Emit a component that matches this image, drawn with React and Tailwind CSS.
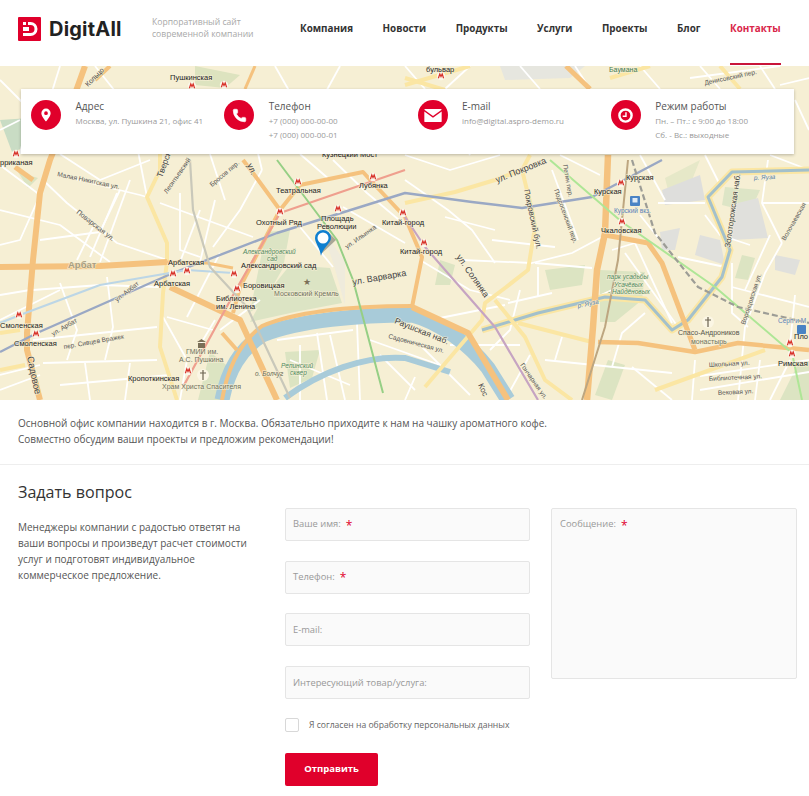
import { Phone } from "lucide-react";

const LAND = "#f6efd4";

// streets of the map, in page coordinates (viewBox starts at y=66)
const whiteStreets = [
  "M57 175 L140 195 L147 197", "M43 180 L67 203 L117 243 L167 260", "M117 193 L90 257", "M93 227 L77 260",
  "M160 203 L253 237", "M180 193 L180 250 L200 257", "M213 247 L240 210 L262 170", "M60 283 L77 330 L67 360",
  "M107 277 L113 327 L105 360", "M33 290 L100 285 L160 287", "M33 340 L157 327", "M167 317 L213 330", "M43 363 L157 360",
  "M187 317 L220 253", "M163 317 L187 360 L180 400", "M300 227 L333 267", "M343 207 L405 243", "M333 160 L367 193 L405 225",
  "M317 333 L327 400", "M357 323 L360 400", "M277 340 L353 330", "M405 180 L448 210 L472 230 L495 263", "M462 260 L532 263 L572 253 L602 237",
  "M492 240 L555 247", "M538 267 L538 297", "M508 303 L552 293", "M552 170 L578 240", "M535 263 L592 268", "M445 217 L495 230",
  "M625 253 L678 327", "M612 250 L635 243", "M635 243 L672 323", "M645 313 L622 333 L612 367", "M732 287 L809 307",
  "M678 257 L725 267", "M732 263 L732 313 L748 327", "M782 243 L765 273 L745 327 L738 400", "M658 203 L705 203", "M762 203 L809 203",
  "M768 160 L762 203 L782 243", "M695 360 L692 400", "M545 360 L672 373", "M632 367 L672 400", "M562 337 L555 360", "M415 377 L405 400",
  "M0 80 L30 110 L20 154", "M60 66 L40 130", "M95 66 L130 110 L147 197", "M0 210 L60 225 L110 262", "M40 240 L100 232 L120 190",
  "M130 180 L100 262", "M0 320 L60 290", "M0 375 L40 365", "M60 385 L170 375", "M130 363 L125 400", "M85 363 L90 400",
  "M200 210 L180 262", "M215 200 L200 262", "M250 120 L262 170", "M275 66 L300 110", "M340 66 L305 130", "M405 66 L425 89",
  "M470 66 L445 89", "M520 66 L540 89", "M575 66 L590 89", "M640 66 L660 89", "M690 78 L780 66", "M700 66 L720 89", "M760 66 L775 89",
  "M780 85 L809 78", "M795 100 L809 130", "M0 130 L20 120", "M405 155 L450 170 L500 155", "M560 155 L600 175", "M640 155 L665 200",
  "M705 155 L720 185", "M770 155 L809 170", "M0 165 L40 195 L20 240 L0 245", "M60 154 L100 180 L150 160", "M210 154 L225 200",
  "M300 154 L330 180", "M420 260 L470 290 L510 300", "M430 320 L505 305", "M520 290 L510 330 L490 350", "M450 345 L520 345", "M530 355 L505 400",
  "M590 300 L612 290", "M700 390 L809 372", "M700 376 L809 360", "M760 360 L755 400", "M790 360 L770 400", "M745 290 L770 235",
  "M705 215 L720 235 L750 245", "M640 215 L660 240", "M795 295 L790 345", "M0 295 L30 290", "M0 390 L40 375", "M220 330 L260 300",
  "M200 345 L215 320", "M300 345 L300 400", "M330 335 L345 400", "M370 340 L440 365", "M380 355 L415 390", "M420 345 L470 395",
  "M290 360 L350 385", "M460 135 L470 155",
];

const yellowStreets = [
  "M160 170 L147 197 L167 243 L167 262 L163 293 L160 347 L177 400",
  "M160 154 L160 170",
  "M405 203 L455 192 L495 180 L522 170 L532 210 L535 227 L528 270 L505 288 L485 303 L482 320 L442 367 L425 387",
  "M522 170 L530 155",
  "M495 300 L525 337 L545 380 L572 400",
  "M518 323 L592 342",
  "M655 390 L765 350",
  "M0 333 L20 330",
  "M405 78 L445 90", "M405 85 L470 66",
  "M610 78 L650 66",
  "M0 370 L25 365",
  "M720 66 L740 89",
];

const yauza = "M482 330 L538 313 L605 297 L645 300 L672 330 L688 320 L722 277 L730 250 L708 197 L732 172 L809 170";

const orangeRoads = [
  { d: "M85 66 L62 130 L50 160 L40 193 L33 260 L27 333 L27 350 L40 400", w: 6 },
  { d: "M0 267 L100 266 L167 262", w: 6 },
  { d: "M167 262 L207 263 L233 268", w: 3 },
  { d: "M15 167 L33 180", w: 5 },
  { d: "M170 287 L240 320 L277 400", w: 6 },
  { d: "M243 160 L253 173 L280 210 L240 287 L233 313", w: 4 },
  { d: "M280 210 L300 185 L363 172 L373 183 L405 217 L422 257 L412 307", w: 4 },
  { d: "M412 307 L468 333 L508 400", w: 6 },
  { d: "M608 155 L605 233 L597 270 L593 327 L587 400", w: 6.5 },
  { d: "M605 235 L648 243 L662 263 L695 350", w: 5 },
  { d: "M598 342 L638 343 L695 352 L738 343 L788 348 L809 350", w: 4.5 },
  { d: "M222 333 L237 350", w: 4 },
  { d: "M566 66 L590 89", w: 5 },
  { d: "M95 80 L110 66", w: 4 },
  { d: "M245 89 L255 66", w: 3 },
];

const metroLines = [
  { d: "M0 352 L37 333 L173 273 L277 233 L405 193 L472 202 L522 208 L592 197 L662 160", c: "#9aa8c4", w: 2.4 },
  { d: "M0 323 L20 315 L100 285 L187 270 L233 273", c: "#bcd6e6", w: 2.2 },
  { d: "M183 387 L237 288 L280 213 L405 170", c: "#ef9f8e", w: 2.2 },
  { d: "M277 160 L337 240 L353 280 L383 393", c: "#96cf85", w: 2 },
  { d: "M190 160 L193 210 L210 267 L247 307 L290 398", c: "#c9c8ba", w: 2.2 },
  { d: "M550 160 L622 222 L715 287 L792 353 L802 400", c: "#aee696", w: 2 },
  { d: "M405 217 L425 247 L495 327 L538 400", c: "#c6a4c2", w: 2.2 },
  { d: "M628 160 L618 260 L605 327 L582 400", c: "#bda680", w: 2 },
  { d: "M632 160 L655 233 L698 287 L738 307 L809 323", c: "#9d9d96", w: 2.2, dash: "6 3" },
];

const parks = [
  { d: "M266 232 L290 230 L283 268 L262 305 L250 312 Z", c: "#dce4c4" },
  { d: "M290 265 L330 268 L342 303 L295 312 L250 322 L262 300 Z", c: "#dce4c4" },
  { d: "M545 270 L585 265 L582 285 L550 290 Z", c: "#dce4c2" },
  { d: "M600 270 L645 272 L642 300 L615 322 L600 322 Z", c: "#dce4c2" },
  { d: "M285 352 L320 350 L312 378 L290 388 Z", c: "#dce4c2" },
  { d: "M210 352 L235 372 L222 400 L198 400 Z", c: "#dce4c2" },
  { d: "M725 187 L760 190 L750 212 L722 205 Z", c: "#dde5c6" },
  { d: "M742 255 L755 258 L748 280 L735 278 Z", c: "#dce4c2" },
  { d: "M665 178 L700 160 L690 185 L668 190 Z", c: "#e6e8c8" },
  { d: "M195 66 L240 75 L225 88 L195 85 Z", c: "#dde3bf" },
  { d: "M0 120 L30 118 L32 145 L12 152 Z", c: "#c9dcc4" },
  { d: "M18 172 L38 178 L28 188 Z", c: "#dce4c2" },
  { d: "M608 360 L625 365 L612 400 L595 395 Z", c: "#dce4c2" },
  { d: "M440 260 L455 265 L450 285 L435 285 Z", c: "#dce4c2" },
  { d: "M800 360 L809 360 L809 400 L780 400 Z", c: "#dce4c2" },
];

const greyBlocks = [
  { d: "M662 190 L700 175 L705 200 L665 205 Z", c: "#dededc" },
  { d: "M730 205 L758 198 L768 238 L732 240 Z", c: "#e0e0dc" },
  { d: "M700 235 L720 240 L725 265 L695 255 Z", c: "#e0e0dc" },
  { d: "M775 255 L800 260 L795 275 L775 270 Z", c: "#e0e0dc" },
  { d: "M660 232 L680 228 L675 250 L662 250 Z", c: "#e0e0dc" },
  { d: "M500 66 L585 66 L570 78 L505 80 Z", c: "#e6e6df" },
  { d: "M320 225 L345 262 L345 305 L333 262 Z", c: "#efebdc" },
];

const labels = [
  { t: "Пушкинская", x: 170, y: 80, s: 7.5, c: "#222" },
  { t: "бульвар", x: 426, y: 72, s: 7.5, c: "#222" },
  { t: "Баумана", x: 609, y: 72, s: 7, c: "#3f7a55" },
  { t: "рриканая", x: 0, y: 165, s: 7.5, c: "#222" },
  { t: "Кузнецкий Мост", x: 322, y: 157, s: 7.5, c: "#222" },
  { t: "Театральная", x: 276, y: 193, s: 7.5, c: "#222" },
  { t: "Лубянка", x: 359, y: 188, s: 7.5, c: "#222" },
  { t: "Охотный Ряд", x: 256, y: 225, s: 7.5, c: "#222" },
  { t: "Площадь", x: 321, y: 221, s: 7.5, c: "#222" },
  { t: "Революции", x: 317, y: 228.5, s: 7.5, c: "#222" },
  { t: "Китай-город", x: 382, y: 225, s: 7.5, c: "#222" },
  { t: "Китай-город", x: 400, y: 254, s: 7.5, c: "#222" },
  { t: "Арбатская", x: 168, y: 265, s: 7.5, c: "#222" },
  { t: "Арбатская", x: 154, y: 286, s: 7.5, c: "#222" },
  { t: "Александровский сад", x: 241, y: 267.5, s: 7.5, c: "#222" },
  { t: "Боровицкая", x: 243, y: 288, s: 7.5, c: "#222" },
  { t: "Библиотека", x: 216, y: 301, s: 7.5, c: "#222" },
  { t: "им. Ленина", x: 216, y: 308.5, s: 7.5, c: "#222" },
  { t: "Смоленская", x: 0, y: 328, s: 7.5, c: "#222" },
  { t: "Смоленская", x: 14, y: 346, s: 7.5, c: "#222" },
  { t: "Кропоткинская", x: 128, y: 381, s: 7.5, c: "#222" },
  { t: "Курская", x: 626, y: 180, s: 7.5, c: "#222" },
  { t: "Курская", x: 594, y: 194, s: 7.5, c: "#222" },
  { t: "Чкаловская", x: 601, y: 233, s: 7.5, c: "#222" },
  { t: "Римская", x: 778, y: 366, s: 7.5, c: "#222" },
  { t: "Арбат", x: 68, y: 268, s: 9.5, c: "#a89e82", b: true },
  { t: "Московский Кремль", x: 274, y: 296, s: 7, c: "#6f7260" },
  { t: "Александровский", x: 243, y: 254, s: 6.5, c: "#4f8a62", i: true },
  { t: "сад", x: 267, y: 261, s: 6.5, c: "#4f8a62", i: true },
  { t: "ГМИИ им.", x: 186, y: 354, s: 7, c: "#6f7260" },
  { t: "А.С. Пушкина", x: 179, y: 362, s: 7, c: "#6f7260" },
  { t: "Храм Христа Спасителя", x: 162, y: 389, s: 7, c: "#6f7260" },
  { t: "Репинский", x: 281, y: 368, s: 6.5, c: "#4f8a62", i: true },
  { t: "сквер", x: 290, y: 375, s: 6.5, c: "#4f8a62", i: true },
  { t: "о. Болчуг", x: 255, y: 376, s: 6.5, c: "#6a6a55", i: true },
  { t: "парк усадьбы", x: 607, y: 279, s: 6.5, c: "#4f8a62", i: true },
  { t: "Усачёвых", x: 614, y: 287, s: 6.5, c: "#4f8a62", i: true },
  { t: "- Найдёновых", x: 608, y: 294, s: 6.5, c: "#4f8a62", i: true },
  { t: "Спасо-Андроников", x: 678, y: 335, s: 7, c: "#55554a" },
  { t: "монастырь", x: 691, y: 344, s: 7, c: "#6f7260" },
  { t: "Курский вкз.", x: 614, y: 213, s: 6.5, c: "#5a82b8" },
  { t: "Серп и М", x: 778, y: 323, s: 6.5, c: "#5a82b8" },
  { t: "Пло", x: 794, y: 339, s: 7.5, c: "#222" },
  { t: "Школьная ул.", x: 709, y: 367, s: 6.5, c: "#555", r: -3 },
  { t: "Библиотечная ул.", x: 709, y: 381, s: 6.5, c: "#555", r: -3 },
  { t: "Вековая ул.", x: 718, y: 395, s: 6.5, c: "#555", r: -3 },
  { t: "ул. Покровка", x: 497, y: 183, s: 9, c: "#444", r: -22 },
  { t: "ул. Варварка", x: 353, y: 285, s: 9, c: "#444", r: -10 },
  { t: "ул. Солянка", x: 456, y: 257, s: 9, c: "#444", r: 55 },
  { t: "Покровский бул.", x: 524, y: 190, s: 8, c: "#444", r: 78 },
  { t: "Раушская наб.", x: 394, y: 323, s: 8.5, c: "#444", r: 22 },
  { t: "Садовническая ул.", x: 388, y: 338, s: 6.5, c: "#555", r: 15 },
  { t: "Садовое", x: 27, y: 357, s: 9.5, c: "#444", r: 78 },
  { t: "Золоторожская наб.", x: 730, y: 248, s: 8, c: "#444", r: -82 },
  { t: "р. Яуза", x: 754, y: 180, s: 6.5, c: "#5a82a8", r: -3, i: true },
  { t: "р. Яуза", x: 578, y: 308, s: 6.5, c: "#5a82a8", r: -12, i: true },
  { t: "Поварская ул.", x: 76, y: 213, s: 7, c: "#555", r: 38 },
  { t: "Малая Никитская ул.", x: 57, y: 176, s: 6.5, c: "#555", r: 12 },
  { t: "ул. Арбат", x: 117, y: 302, s: 6.5, c: "#555", r: -38 },
  { t: "ул. Арбат", x: 53, y: 336, s: 6.5, c: "#555", r: -30 },
  { t: "пер. Сивцев Вражек", x: 64, y: 349, s: 6.5, c: "#555", r: -10 },
  { t: "ул. Ильинка", x: 347, y: 249, s: 6.5, c: "#555", r: -35 },
  { t: "Тверская", x: 162, y: 178, s: 8.5, c: "#444", r: -70 },
  { t: "ул.", x: 247, y: 165, s: 8.5, c: "#444", r: 65 },
  { t: "Бросов пер.", x: 212, y: 187, s: 6.5, c: "#555", r: -40 },
  { t: "Леонтьевский", x: 167, y: 194, s: 6.5, c: "#555", r: -55 },
  { t: "Петин пер.", x: 563, y: 165, s: 6.5, c: "#555", r: 80 },
  { t: "Подсосенский пер.", x: 554, y: 190, s: 6.5, c: "#555", r: 70 },
  { t: "Воронцовская ул.", x: 745, y: 325, s: 6.5, c: "#555", r: -72 },
  { t: "Гончарная ул.", x: 520, y: 365, s: 6.5, c: "#555", r: 55 },
  { t: "Денисовский пер.", x: 705, y: 85, s: 6.5, c: "#555", r: -12 },
  { t: "Волочаевская", x: 785, y: 241, s: 6.5, c: "#555", r: -60 },
  { t: "Кольцо", x: 88, y: 87, s: 7, c: "#444", r: -45 },
  { t: "Кос", x: 478, y: 385, s: 8, c: "#444", r: 65 },
];

// metro stations
const stations = [
  [192, 86], [224, 85], [16, 154], [298, 182], [373, 177], [280, 212], [338, 209], [403, 213],
  [424, 243], [187, 271], [173, 274], [234, 274], [237, 289], [19, 315], [36, 334], [188, 371],
  [621, 183], [622, 222], [790, 343], [792, 354], [441, 76],
];

function MapPicture() {
  return (
    <svg viewBox="0 66 809 334" className="block w-full h-full" style={{ fontFamily: "'Liberation Sans', Arial, sans-serif" }}>
      <rect x="0" y="66" width="809" height="334" fill={LAND} />
      {parks.map((p, i) => <path key={i} d={p.d} fill={p.c} />)}
      {greyBlocks.map((p, i) => <path key={i} d={p.d} fill={p.c} />)}

      <g fill="none" stroke="#ffffff" strokeWidth="1.8" strokeLinejoin="round">
        {whiteStreets.map((d, i) => <path key={i} d={d} />)}
      </g>

      {/* river and canal */}
      <path d="M222 400 C228 370 240 350 262 335 C300 320 360 315 412 315 C440 322 470 345 488 368 L508 400" fill="none" stroke="#a8cbd9" strokeWidth="15" />
      <path d="M285 398 C320 372 365 355 405 358 L450 372" fill="none" stroke="#a8cbd9" strokeWidth="6" />
      <path d={yauza} fill="none" stroke="#fbe6a3" strokeWidth="7" strokeLinejoin="round" />
      <path d={yauza} fill="none" stroke="#a3c0cb" strokeWidth="3" strokeLinejoin="round" />

      <g fill="none" stroke="#fbe6a3" strokeWidth="4" strokeLinejoin="round">
        {yellowStreets.map((d, i) => <path key={i} d={d} />)}
      </g>
      <path d="M222 400 C228 365 243 340 262 326 C300 310 360 306 412 306" fill="none" stroke="#f5c27e" strokeWidth="4" />
      <g fill="none" stroke="#f5c27e" strokeLinejoin="round">
        {orangeRoads.map((r, i) => <path key={i} d={r.d} strokeWidth={r.w} />)}
      </g>
      <g fill="none" strokeLinejoin="round">
        {metroLines.map((l, i) => (
          <path key={i} d={l.d} stroke={l.c} strokeWidth={l.w} strokeDasharray={l.dash} />
        ))}
      </g>

      {stations.map(([x, y], i) => (
        <g key={i}>
          <circle cx={x} cy={y} r="4.2" fill="#fbf7ea" />
          <path d={`M${x - 2.6} ${y + 2.2} L${x - 1.2} ${y - 2} L${x} ${y + 0.6} L${x + 1.2} ${y - 2} L${x + 2.6} ${y + 2.2}`} fill="none" stroke="#d8332b" strokeWidth="1.2" />
        </g>
      ))}

      {labels.map((l, i) => (
        <text
          key={i}
          x={l.x}
          y={l.y}
          fontSize={l.s}
          fill={l.c}
          fontWeight={l.b ? 700 : 400}
          fontStyle={l.i ? "italic" : "normal"}
          transform={l.r ? `rotate(${l.r} ${l.x} ${l.y})` : undefined}
          stroke={LAND}
          strokeWidth="1.5"
          strokeOpacity="0.75"
          paintOrder="stroke"
        >
          {l.t}
        </text>
      ))}

      {/* landmarks */}
      <text x="303" y="285" fontSize="9" fill="#7a6f58">★</text>
      <circle cx="203" cy="375" r="6" fill="#fbf6e4" />
      <path d="M203 370 V380 M200 373 H206" stroke="#6b6350" strokeWidth="1.2" />
      <circle cx="708" cy="322" r="6" fill="#fbf6e4" />
      <path d="M708 317 V327 M705 320 H711" stroke="#6b6350" strokeWidth="1.2" />
      <path d="M198 343 H205 V348 H198 Z M197 342 L201.5 339 L206 342 Z" fill="#7a6f58" />
      <rect x="630" y="196" width="10" height="10" rx="1" fill="#4a83c4" />
      <path d="M632.5 198 H637.5 V202.5 H632.5 Z" fill="#dfeaf6" />
      <rect x="797" y="325" width="9" height="9" rx="1" fill="#4a83c4" />

      {/* pin */}
      <path d="M321 254 L336 240 L328 232 Z" fill="#6b6b60" opacity="0.55" />
      <path d="M321 256 C322 249 331 243 331 238 A8 8 0 1 0 315 238 C315 243 320 248 321 256 Z" fill="#0f7fd0" />
      <circle cx="323" cy="238" r="5.5" fill="#ffffff" />
    </svg>
  );
}

function PinIcon() {
  return (
    <svg viewBox="0 0 14 18" className="w-[10px] h-[14px]">
      <path fillRule="evenodd" fill="#fff" d="M7 0a6.5 6.5 0 0 0-6.5 6.5C.5 11 7 18 7 18s6.5-7 6.5-11.5A6.5 6.5 0 0 0 7 0Zm0 9a2.6 2.6 0 1 1 0-5.2A2.6 2.6 0 0 1 7 9Z" />
    </svg>
  );
}

function ClockIcon() {
  return (
    <svg viewBox="0 0 16 16" className="w-[15px] h-[15px]">
      <circle cx="8" cy="8" r="6.5" fill="none" stroke="#fff" strokeWidth="2.6" />
      <path d="M8.5 4.5V8.8H5" fill="none" stroke="#fff" strokeWidth="1.5" />
    </svg>
  );
}

function EnvelopeIcon() {
  return (
    <svg viewBox="0 0 20 15" className="w-[18px] h-[13px]">
      <path fill="#fff" d="M1 0h18a1 1 0 0 1 1 1L10 8 0 1a1 1 0 0 1 1-1Z" />
      <path fill="#fff" d="M0 3l10 7 10-7v11a1 1 0 0 1-1 1H1a1 1 0 0 1-1-1Z" />
    </svg>
  );
}

const contacts = [
  { title: "Адрес", lines: ["Москва, ул. Пушкина 21, офис 41"], icon: <PinIcon /> },
  { title: "Телефон", lines: ["+7 (000) 000-00-00", "+7 (000) 000-00-01"], icon: <Phone size={15} fill="#fff" stroke="#fff" strokeWidth={1} /> },
  { title: "E-mail", lines: ["info@digital.aspro-demo.ru"], icon: <EnvelopeIcon /> },
  { title: "Режим работы", lines: ["Пн. – Пт.: с 9:00 до 18:00", "Сб. - Вс.: выходные"], icon: <ClockIcon /> },
];

const nav = ["Компания", "Новости", "Продукты", "Услуги", "Проекты", "Блог"];

function Field({ label, required }) {
  return (
    <div className="h-[33px] bg-[#fafafa] border border-[#e5e5e5] rounded-[2px] px-[7px] flex items-center text-[9.35px] text-[#999]">
      <span>{label}</span>
      {required && <span className="ml-[5px] text-[12px] leading-none mt-[2px] text-[#e0002b]">*</span>}
    </div>
  );
}

export default function App() {
  return (
    <div className="w-[809px] h-[796px] overflow-hidden bg-white font-['Open_Sans',sans-serif] text-[#555]">
      {/* header */}
      <header className="h-[66px] flex items-center pl-[18px] pb-[9px]">
        <div className="flex items-center w-[134px] gap-[8px]">
          <svg viewBox="0 0 23 24" className="w-[23px] h-[24px] shrink-0">
            <rect width="23" height="24" rx="1" fill="#e0002b" />
            <path d="M10 5h2.5a7 7 0 0 1 0 14H5v-3h7.5a4 4 0 0 0 0-8H10Z" fill="#fff" />
            <rect x="5" y="5" width="3" height="3" fill="#fff" />
            <rect x="5" y="10" width="6" height="4" fill="#fff" />
          </svg>
          <span className="font-['Inter',sans-serif] font-bold text-[20px] leading-none text-[#222] tracking-[0.2px]">DigitAll</span>
        </div>
        <div className="w-[148px] -mt-[1px] text-[8.6px] leading-[12px] text-[#a8a8a8]">
          Корпоративный сайт<br />современной компании
        </div>
        <nav className="flex items-center text-[9.9px] font-bold text-[#333] gap-[29.5px]">
          {nav.map((n) => <span key={n}>{n}</span>)}
          <span className="text-[#d9274a] relative">
            Контакты
            <span className="absolute left-0 right-0 top-[42px] h-[1.5px] bg-[#c9153a]" />
          </span>
        </nav>
      </header>

      {/* map with contact card over it */}
      <section className="relative h-[334px]">
        <MapPicture />
        <div className="absolute left-[21px] top-[23px] w-[773px] h-[65px] bg-white shadow-[0_1px_3px_rgba(0,0,0,0.25)] pl-[10px] pt-[11px] grid grid-cols-[repeat(4,193.25px)]">
          {contacts.map((c) => (
            <div key={c.title} className="flex">
              <div className="w-[30px] h-[30px] rounded-full bg-[#e0002b] flex items-center justify-center shrink-0">{c.icon}</div>
              <div className="ml-[14.5px] -mt-[1px]">
                <div className="text-[10px] leading-[15px] text-[#555]">{c.title}</div>
                {c.lines.map((l) => (
                  <div key={l} className="text-[8px] leading-[14px] text-[#999]">{l}</div>
                ))}
              </div>
            </div>
          ))}
        </div>
      </section>

      {/* intro */}
      <div className="h-[65px] border-b border-[#eeeeee] pl-[18px] pt-[15px] text-[10px] leading-[16px] text-[#555]">
        Основной офис компании находится в г. Москва. Обязательно приходите к нам на чашку ароматного кофе.<br />
        Совместно обсудим ваши проекты и предложим рекомендации!
      </div>

      {/* question form */}
      <div className="flex pl-[18px] pt-[16px]">
        <div className="w-[267px] shrink-0">
          <h2 className="text-[16.1px] leading-[22px] font-normal text-[#333]">Задать вопрос</h2>
          <p className="mt-[16px] w-[235px] text-[10px] leading-[16px] text-[#555]">
            Менеджеры компании с радостью ответят на ваши вопросы и произведут расчет стоимости услуг и подготовят индивидуальное коммерческое предложение.
          </p>
        </div>
        <div className="w-[245px] shrink-0 pt-[27px]">
          <div className="flex flex-col gap-[19.7px]">
            <Field label="Ваше имя:" required />
            <Field label="Телефон:" required />
            <Field label="E-mail:" />
            <Field label="Интересующий товар/услуга:" />
          </div>
          <div className="flex items-center mt-[19px]">
            <span className="w-[14px] h-[14px] border border-[#d8d8d8] rounded-[2px] bg-white" />
            <span className="ml-[10px] text-[8.6px] text-[#666]">Я согласен на обработку персональных данных</span>
          </div>
          <button className="mt-[21px] w-[93px] h-[33px] bg-[#e0002b] rounded-[2px] text-white text-[9.5px] font-bold">Отправить</button>
        </div>
        <div className="ml-[21px] pt-[27px]">
          <div className="w-[246px] h-[171px] bg-[#fafafa] border border-[#e5e5e5] rounded-[2px] pl-[8px] pt-[8px] text-[9.35px] text-[#999] flex items-start">
            <span>Сообщение:</span>
            <span className="ml-[5px] text-[12px] leading-none mt-[3px] text-[#e0002b]">*</span>
          </div>
        </div>
      </div>
    </div>
  );
}
